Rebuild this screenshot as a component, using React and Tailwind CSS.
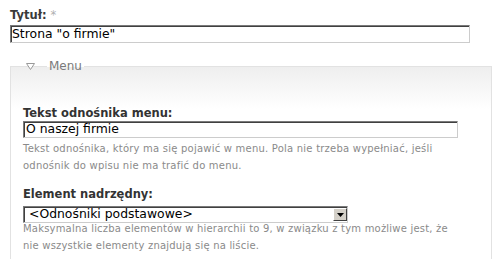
import React from "react";

const inset =
  "border border-t-[#7a7a7a] border-l-[#7a7a7a] border-r-[#cccccc] border-b-[#cccccc] shadow-[inset_1px_1px_0_#404040] bg-white";

export default function App() {
  return (
    <div
      className="w-[503px] h-[259px] overflow-hidden bg-white pl-[10px] pt-[7px]"
      style={{ fontFamily: '"DejaVu Sans", Verdana, sans-serif' }}
    >
      <div className="text-[11.5px] leading-[16px] font-bold text-[#3a3a3a]">
        Tytuł: <span className="font-normal text-[#b0b0b0]">*</span>
      </div>
      <div className={`mt-[2px] h-[18px] w-[460px] pl-[1px] text-[12.4px] leading-[15px] text-black ${inset}`}>
        Strona "o firmie"
      </div>

      <fieldset className="relative mt-[16px] w-[482px] border border-[#e2e2e2] bg-[linear-gradient(to_bottom,#eeeeee,#ffffff_42px)] px-[12px] pt-[32px] pb-[20px]">
        <legend className="ml-[24px] px-[2px] text-[12px] leading-[14px] text-[#7a7a7a]">
          Menu
        </legend>
        <svg
          className="absolute left-[15px] top-[-10px]"
          width="9"
          height="7"
          viewBox="0 0 9 7"
        >
          <path d="M0.5 0.5 H8.5 L4.5 6.5 Z" fill="#ffffff" stroke="#9a9a9a" strokeWidth="1" />
        </svg>

        <div className="text-[11.5px] leading-[16px] font-bold text-[#333333]">
          Tekst odnośnika menu:
        </div>
        <div className={`h-[17px] w-[435px] pl-[2px] text-[12.4px] leading-[14px] text-black ${inset}`}>
          O naszej firmie
        </div>
        <div className="mt-[3px] text-[10px] tracking-[0.22px] leading-[16.7px] text-[#8a8a8a] whitespace-nowrap">
          <div>Tekst odnośnika, który ma się pojawić w menu. Pola nie trzeba wypełniać, jeśli</div>
          <div>odnośnik do wpisu nie ma trafić do menu.</div>
        </div>

        <div className="mt-[12px] text-[11.5px] leading-[16px] font-bold text-[#333333]">
          Element nadrzędny:
        </div>
        <div className={`mt-[4px] flex h-[17px] w-[325px] items-stretch ${inset}`}>
          <div className="flex-1 pl-[5px] text-[12.4px] leading-[14px] text-black whitespace-nowrap">
            &lt;Odnośniki podstawowe&gt;
          </div>
          <div className="my-[1px] mr-0 flex w-[14px] items-center justify-center border border-t-white border-l-white border-r-[#404040] border-b-[#404040] bg-[#d4d0c8]">
            <svg width="7" height="4" viewBox="0 0 7 4">
              <path d="M0 0 H7 L3.5 4 Z" fill="#000" />
            </svg>
          </div>
        </div>
        <div className="mt-[-2px] text-[10px] tracking-[0.2px] leading-[16.7px] text-[#8a8a8a] whitespace-nowrap">
          <div>Maksymalna liczba elementów w hierarchii to 9, w związku z tym możliwe jest, że</div>
          <div>nie wszystkie elementy znajdują się na liście.</div>
        </div>
      </fieldset>
    </div>
  );
}
